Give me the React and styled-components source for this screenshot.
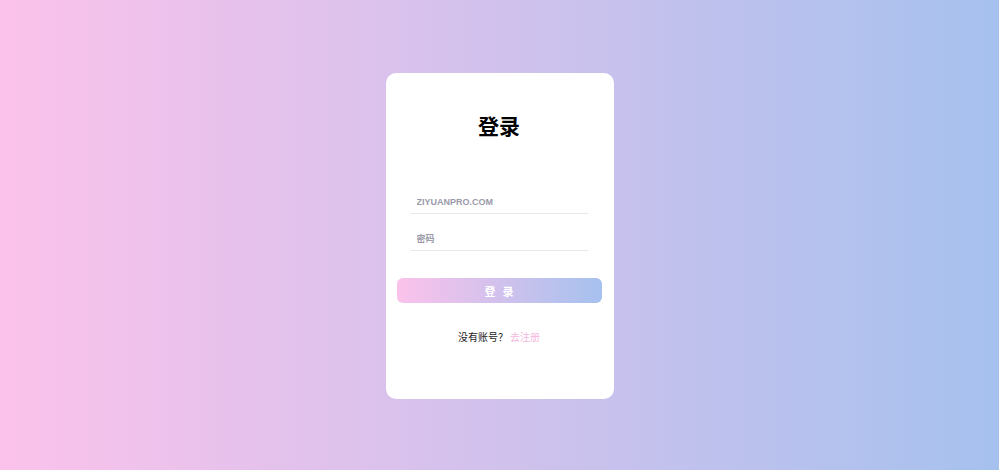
import styled, { createGlobalStyle } from 'styled-components'

const GlobalStyle = createGlobalStyle`
  html, body {
    margin: 0;
    padding: 0;
    height: 100%;
  }
  body {
    font-family: 'Liberation Sans', 'Noto Sans CJK SC', sans-serif;
  }
  #root {
    height: 100%;
  }
`

const Page = styled.div`
  width: 100%;
  height: 470px;
  display: flex;
  justify-content: center;
  align-items: flex-start;
  background-image: linear-gradient(to right, #fbc2eb, #a6c1ee);
`

const Card = styled.div`
  box-sizing: border-box;
  width: 228px;
  height: 326px;
  margin-top: 73px;
  margin-left: 1px;
  background: #fff;
  border-radius: 10px;
  padding: 0 12px 0 10px;
  display: flex;
  flex-direction: column;
  align-items: center;
`

const Title = styled.h1`
  margin: 39px 0 0;
  font-size: 21px;
  font-weight: bold;
  line-height: 26px;
  color: #000;
  font-family: 'Noto Sans CJK SC', sans-serif;
`

const Form = styled.div`
  width: 177px;
  margin-top: 53px;
  display: flex;
  flex-direction: column;
  gap: 14px;
`

const Input = styled.input`
  box-sizing: border-box;
  width: 100%;
  height: 23px;
  border: none;
  border-bottom: 1px solid #e8e8ec;
  outline: none;
  padding: 0 6px 0;
  font-size: 9px;
  font-family: 'Liberation Sans', 'Noto Sans CJK SC', sans-serif;
  background: transparent;

  &::placeholder {
    color: #9a9aa8;
    font-weight: bold;
  }
`

const Button = styled.button`
  width: 205px;
  height: 25px;
  margin-top: 27px;
  border: none;
  border-radius: 6px;
  background-image: linear-gradient(to right, #fbc2eb, #a6c1ee);
  color: #fff;
  font-size: 11px;
  font-weight: bold;
  letter-spacing: 7px;
  text-indent: 7px;
  font-family: 'Noto Sans CJK SC', sans-serif;
  cursor: pointer;
`

const Footer = styled.p`
  margin: 26px 0 0;
  font-size: 10px;
  color: #222;
  font-family: 'Noto Sans CJK SC', sans-serif;
`

const Link = styled.a`
  color: #f5b8e0;
  text-decoration: none;
  margin-left: 2px;
`

export default function App() {
  return (
    <>
      <GlobalStyle />
      <Page>
        <Card>
          <Title>登录</Title>
          <Form>
            <Input placeholder="ZIYUANPRO.COM" />
            <Input type="password" placeholder="密码" />
          </Form>
          <Button>登录</Button>
          <Footer>
            没有账号？<Link href="#">去注册</Link>
          </Footer>
        </Card>
      </Page>
    </>
  )
}
